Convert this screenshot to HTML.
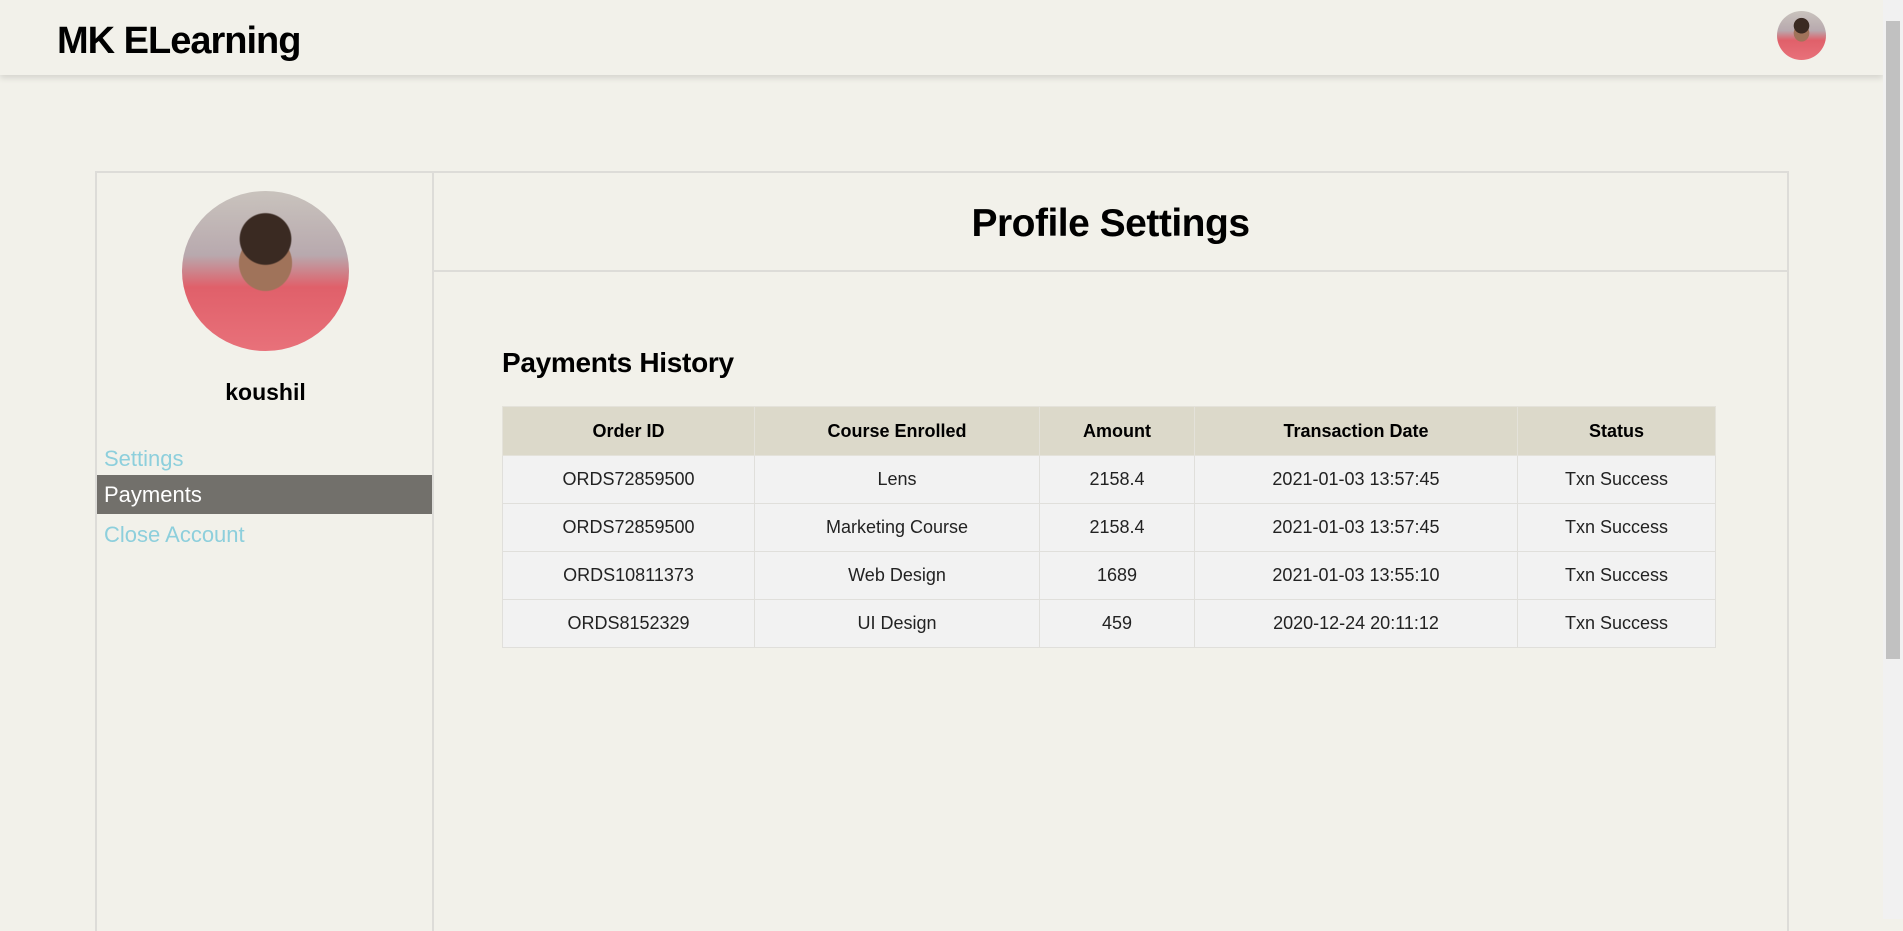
<!DOCTYPE html>
<html><head><style>
*{box-sizing:border-box;margin:0;padding:0}
body{width:1903px;height:919px;overflow:hidden;background:#f2f1ea;font-family:"Liberation Sans",sans-serif;position:relative;color:#000}
.hdr{position:absolute;left:0;top:0;width:1883px;height:75px;background:#f2f1ea;box-shadow:0 3px 6px rgba(0,0,0,0.12)}
.hdr h1{position:absolute;left:57px;top:20px;font-size:38px;font-weight:bold;letter-spacing:-1px}
.av{position:absolute;border-radius:50%;overflow:hidden;background:radial-gradient(circle at 50% 30%,#3a2a22 0 18%,transparent 19%),radial-gradient(ellipse at 50% 45%,#a0735a 0 22%,transparent 23%),linear-gradient(180deg,#c9c3bd 0%,#b8a9ae 40%,#e0606a 60%,#e8717a 100%)}
.sb{position:absolute;left:1883px;top:0;width:20px;height:919px;background:#f1f1f1}
.sb div{position:absolute;left:3px;top:21px;width:14px;height:638px;background:#c1c1c1}
.panel{position:absolute;left:95px;top:171px;width:1694px;height:760px;border:2px solid #dddcd8;border-bottom:none}
.side{position:absolute;left:0;top:0;width:337px;height:100%;border-right:2px solid #dddcd8}
.name{position:absolute;left:0;width:337px;top:206px;text-align:center;font-size:23px;font-weight:bold}
.nav{position:absolute;left:0;width:335px;font-size:22px;padding-left:7px;height:39px;line-height:39px;color:#8dcfdc}
.nav.act{background:#72706b;color:#fff}
.ph{position:absolute;left:337px;top:4px;right:0;height:94px;text-align:center;font-size:39px;font-weight:bold;line-height:94px;letter-spacing:-0.5px}
.phb{position:absolute;left:337px;top:97px;right:0;border-bottom:2px solid #dddcd8}
.pt{position:absolute;left:502px;top:347px;font-size:28px;font-weight:bold;letter-spacing:-0.3px}
table{position:absolute;left:502px;top:406px;width:1214px;border-collapse:collapse;font-size:18px}
th{background:#dcd9ca;height:49px;font-weight:bold;border:1px solid #e4e2da}
td{background:#f2f2f2;height:48px;text-align:center;border:1px solid #e0dfdb;color:#222}
</style></head><body>
<div class="hdr"><h1>MK ELearning</h1><div class="av" style="left:1777px;top:11px;width:49px;height:49px"></div></div>
<div class="sb"><div></div></div>
<div class="panel">
<div class="side">
<div class="av" style="left:85px;top:18px;width:167px;height:160px"></div>
<div class="name">koushil</div>
<div class="nav" style="top:266px">Settings</div>
<div class="nav act" style="top:302px">Payments</div>
<div class="nav" style="top:342px">Close Account</div>
</div>
<div class="ph">Profile Settings</div>
<div class="phb"></div>
</div>
<div class="pt">Payments History</div>
<table>
<colgroup><col style="width:252px"><col style="width:285px"><col style="width:155px"><col style="width:323px"><col></colgroup>
<tr><th>Order ID</th><th>Course Enrolled</th><th>Amount</th><th>Transaction Date</th><th>Status</th></tr>
<tr><td>ORDS72859500</td><td>Lens</td><td>2158.4</td><td>2021-01-03 13:57:45</td><td>Txn Success</td></tr>
<tr><td>ORDS72859500</td><td>Marketing Course</td><td>2158.4</td><td>2021-01-03 13:57:45</td><td>Txn Success</td></tr>
<tr><td>ORDS10811373</td><td>Web Design</td><td>1689</td><td>2021-01-03 13:55:10</td><td>Txn Success</td></tr>
<tr><td>ORDS8152329</td><td>UI Design</td><td>459</td><td>2020-12-24 20:11:12</td><td>Txn Success</td></tr>
</table>
</body></html>
